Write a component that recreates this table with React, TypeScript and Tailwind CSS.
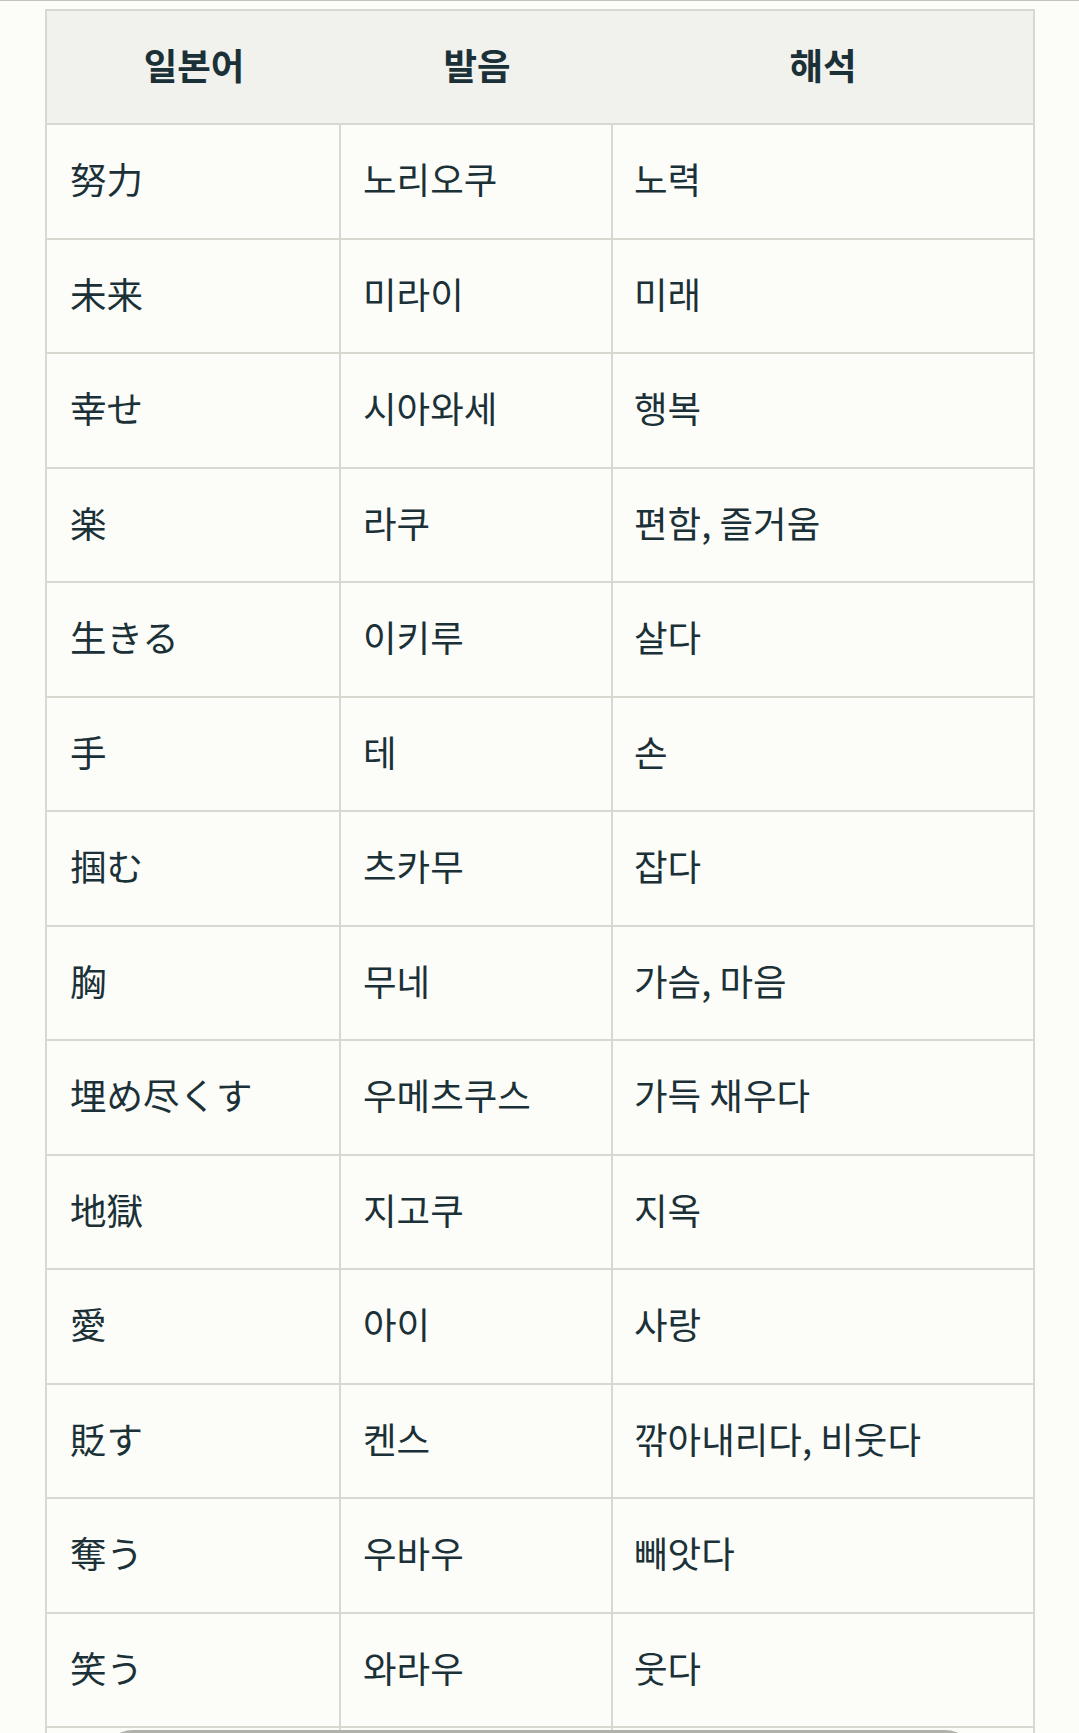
const rows: [string, string, string][] = [
  ["努力", "노리오쿠", "노력"],
  ["未来", "미라이", "미래"],
  ["幸せ", "시아와세", "행복"],
  ["楽", "라쿠", "편함, 즐거움"],
  ["生きる", "이키루", "살다"],
  ["手", "테", "손"],
  ["掴む", "츠카무", "잡다"],
  ["胸", "무네", "가슴, 마음"],
  ["埋め尽くす", "우메츠쿠스", "가득 채우다"],
  ["地獄", "지고쿠", "지옥"],
  ["愛", "아이", "사랑"],
  ["貶す", "켄스", "깎아내리다, 비웃다"],
  ["奪う", "우바우", "빼앗다"],
  ["笑う", "와라우", "웃다"],
  ["", "", ""],
];

export default function App() {
  return (
    <div className="relative h-[1733px] overflow-hidden border-t border-[#c3c5bb] bg-[#fcfdf9] font-['Noto_Sans_CJK_KR','Noto_Sans_CJK_JP',sans-serif] text-[36.5px] leading-none text-[#1b3137]">
      <div className="ml-[45px] mt-[8px] w-[990px] border-2 border-[#d7d8d0]">
        {/* header */}
        <div className="flex h-[114px] border-b-2 border-[#d7d8d0] bg-[#f1f2ee] pb-[4px] font-bold">
          <div className="flex w-[294px] items-center justify-center">일본어</div>
          <div className="flex w-[272px] items-center justify-center">발음</div>
          <div className="flex flex-1 items-center justify-center">해석</div>
        </div>

        {rows.map(([jp, pron, mean], i) => (
          <div key={i} className="flex h-[114.5px] border-b-2 border-[#d7d8d0]">
            <div className="flex w-[294px] items-center border-r-2 border-[#d7d8d0] pb-[4px] pl-[23px]">{jp}</div>
            <div className="flex w-[272px] items-center border-r-2 border-[#d7d8d0] pb-[4px] pl-[22px]">{pron}</div>
            <div className="flex flex-1 items-center pb-[4px] pl-[21px]">{mean}</div>
          </div>
        ))}
      </div>

      {/* floating bar peeking in at the bottom */}
      <div className="absolute left-[103px] top-[1729px] h-[60px] w-[872px] rounded-[40px] border-t-[3px] border-[#b0b1a9] bg-[#e4e5df]" />
    </div>
  );
}
